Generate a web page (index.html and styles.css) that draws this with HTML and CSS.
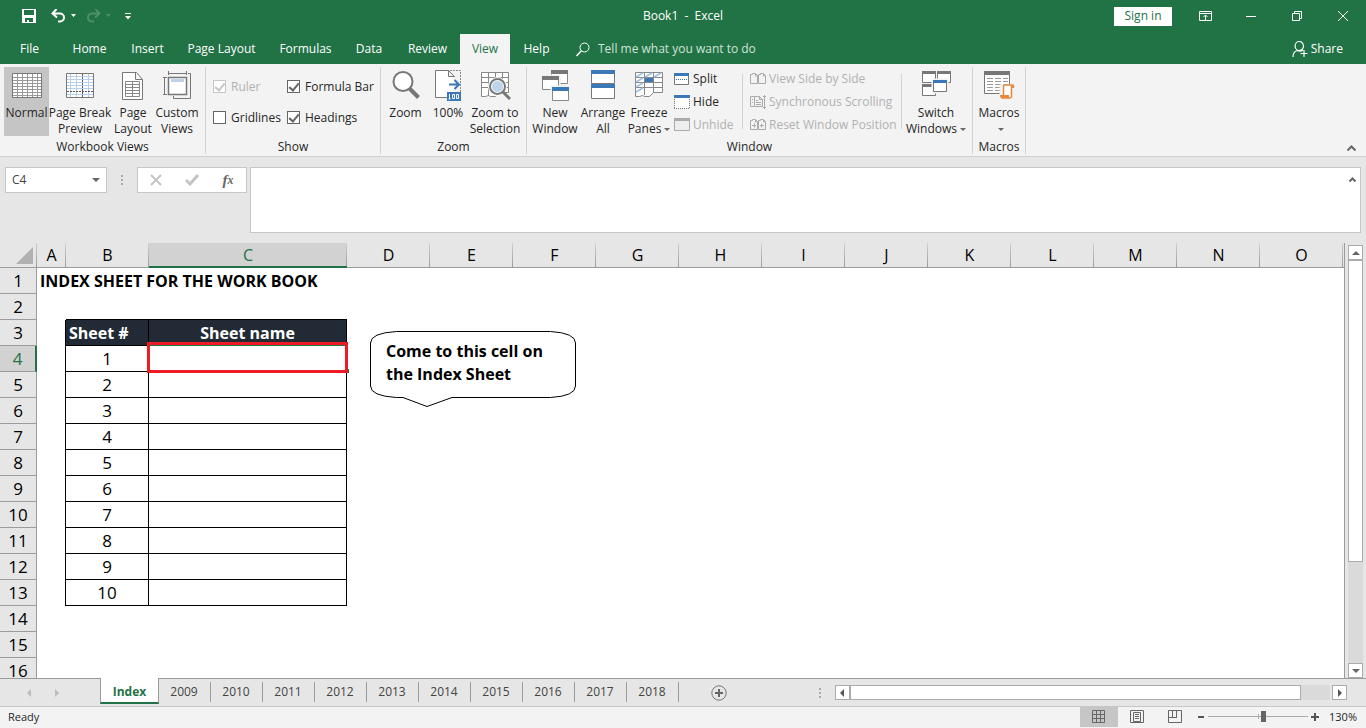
FILE: index.html
```html
<!DOCTYPE html>
<html lang="en">
<head>
    <meta charset="UTF-8">
    <meta name="viewport" content="width=device-width, initial-scale=1.0">
    <title>Book1 - Excel</title>
    <link rel="stylesheet" href="styles.css">
</head>
<body>

    <!-- Title Bar -->
    <header class="title-bar">
        <div class="quick-access">
            <button class="qa-save" aria-label="Save">
                <svg width="14" height="14" viewBox="0 0 14 14"><path fill="#fff" fill-rule="evenodd" d="M0 0h14v14H0zM2 1v5h10V1zM3 9v4h2v-2h2v2h4V9z"/></svg>
            </button>
            <button class="qa-undo" aria-label="Undo">
                <svg width="26" height="14" viewBox="0 0 26 14"><path fill="none" stroke="#fff" stroke-width="2" d="M5.500 0L1.500 4.500 6 8.500M2 4.500h7a4 4 0 0 1 0 8H7"/><path fill="#fff" d="M20 5h5l-2.500 3z"/></svg>
            </button>
            <button class="qa-redo" aria-label="Redo" disabled>
                <svg width="26" height="14" viewBox="0 0 26 14"><path fill="none" stroke="#4e8f6b" stroke-width="2" d="M9.500 0l4 4.500L9 8.500M13 4.500H6a4 4 0 0 0 0 8h2"/><path fill="#4e8f6b" d="M20 5h5l-2.500 3z"/></svg>
            </button>
            <button class="qa-more" aria-label="Customize Quick Access Toolbar">
                <svg width="6" height="7" viewBox="0 0 6 7"><path fill="#fff" d="M0 0h6v1H0zM0 3h6L3 6.500z"/></svg>
            </button>
        </div>
        <h1>Book1&nbsp; -&nbsp; Excel</h1>
        <div class="window-controls">
            <button class="sign-in">Sign in</button>
            <button class="win-btn" aria-label="Ribbon Display Options">
                <svg width="13" height="10" viewBox="0 0 13 10"><path fill="none" stroke="#fff" d="M.5.5h12v9H.5zM0 2.500h13M6.500 9V4M4.500 6l2-2 2 2"/></svg>
            </button>
            <button class="win-btn" aria-label="Minimize">
                <svg width="10" height="10" viewBox="0 0 10 10"><path stroke="#fff" d="M0 5.500h10"/></svg>
            </button>
            <button class="win-btn" aria-label="Restore">
                <svg width="10" height="10" viewBox="0 0 10 10"><path fill="none" stroke="#fff" d="M.5 2.500h7v7h-7zM2.500 2.500v-2h7v7h-2"/></svg>
            </button>
            <button class="win-btn" aria-label="Close">
                <svg width="10" height="10" viewBox="0 0 10 10"><path stroke="#fff" d="M0 0l10 10M10 0L0 10"/></svg>
            </button>
        </div>
    </header>

    <!-- Ribbon Tabs -->
    <nav class="ribbon-tabs">
        <div class="tabs">
            <button>File</button>
            <button>Home</button>
            <button>Insert</button>
            <button>Page Layout</button>
            <button>Formulas</button>
            <button>Data</button>
            <button>Review</button>
            <button class="active">View</button>
            <button>Help</button>
        </div>
        <label class="tell-me">
            <svg width="14" height="15" viewBox="0 0 14 15"><g fill="none" stroke="#fff"><circle cx="8.500" cy="5.500" r="4.500"/><path stroke-width="1.500" d="M5.500 8.500L.5 14"/></g></svg>
            <input type="text" placeholder="Tell me what you want to do">
        </label>
        <button class="share">
            <svg width="16" height="16" viewBox="0 0 16 16"><path fill="none" stroke="#fff" stroke-width="1.200" d="M1 16c0-4 2-6.500 6-6.500M11.500 5a4.200 4.500 0 1 1-8.400 0 4.200 4.500 0 0 1 8.400 0zM5 9c2 1.500 4 1.500 6 0M12 9v7M8.500 12.500h7"/></svg>
            Share
        </button>
    </nav>

    <!-- Ribbon -->
    <section class="ribbon">
        <div class="group views">
            <div class="group-body">
                <button class="big w45 pressed">
                    <svg width="32" height="34" viewBox="0 0 32 34"><path fill="#fff" stroke="#777" d="M1.500 4.500h29v24h-29z"/><path fill="none" stroke="#999" d="M2 8.500h28M2 11.500h28M2 14.500h28M2 17.500h28M2 20.500h28M2 23.500h28M2 26.500h28M6.500 5v23M11.500 5v23M16.500 5v23M21.500 5v23M26.500 5v23"/></svg>
                    <span>Normal</span>
                </button>
                <button class="big w62">
                    <svg width="32" height="34" viewBox="0 0 32 34"><path fill="#fff" stroke="#777" d="M2.500 4.500h27v24h-27z"/><path fill="none" stroke="#b7cfe8" d="M3 7.500h26M3 10.500h26M3 13.500h26M3 16.500h26M3 19.500h26M3 25.500h26M6.500 5v23M12.500 5v23M24.500 5v23"/><path fill="none" stroke="#555" stroke-dasharray="2 1" d="M18.500 5v23M3 22.500h26"/></svg>
                    <span>Page Break<br>Preview</span>
                </button>
                <button class="big w44">
                    <svg width="32" height="34" viewBox="0 0 32 34"><path fill="#fff" stroke="#777" d="M5.500 3.500h14l6 7v20h-20zM18.500 3.500v7h7"/><path fill="none" stroke="#888" d="M8.500 12.500h14v15h-14zM8 15.500h15M8 18.500h15M8 21.500h15M8 24.500h15M15.500 12v16"/></svg>
                    <span>Page<br>Layout</span>
                </button>
                <button class="big w44">
                    <svg width="32" height="34" viewBox="0 0 32 34"><path fill="#fff" stroke="#777" stroke-width="1.500" d="M7.500 8.500h18v17h-18z"/><path fill="#bcd3ea" d="M10 10h13v3H10z"/><path fill="none" stroke="#777" d="M7.500 2v4M25.500 2v4M7 4.500h19M2 8.500h4M2 25.500h4M3.500 8v18M27 4.500h2.500v25h-17V27"/></svg>
                    <span>Custom<br>Views</span>
                </button>
            </div>
            <h2>Workbook Views</h2>
        </div>

        <div class="group show">
            <div class="group-body checks">
                <label class="off"><input type="checkbox" checked disabled>Ruler</label>
                <label><input type="checkbox" checked>Formula Bar</label>
                <label><input type="checkbox">Gridlines</label>
                <label><input type="checkbox" checked>Headings</label>
            </div>
            <h2>Show</h2>
        </div>

        <div class="group zoom">
            <div class="group-body">
                <button class="big w41">
                    <svg width="32" height="34" viewBox="0 0 32 34"><circle cx="13" cy="12.500" r="9.500" fill="#fff" stroke="#777" stroke-width="2"/><path stroke="#777" stroke-width="4" d="M19.500 19.500l9 9"/></svg>
                    <span>Zoom</span>
                </button>
                <button class="big w44">
                    <svg width="32" height="34" viewBox="0 0 32 34"><path fill="#fff" stroke="#777" d="M3.500 1.500h13l6 6v21h-19zM16.500 1.500v6h6"/><path fill="#f2f2f2" d="M15 24h17v10H15zM22 8h3v16h-3z"/><path fill="none" stroke="#888" stroke-dasharray="2 1" d="M18 1.500h10.500V24"/><path fill="none" stroke="#3b78b8" stroke-width="2" d="M17 15.500h9M22.500 11l4.500 4.500-4.500 4.500"/><path fill="#3b78b8" d="M15 23h14v9H15z"/><path fill="none" stroke="#fff" d="M17.500 25v5M16.500 30h2M20.500 25.500h2v4h-2zM24.500 25.500h2v4h-2z"/></svg>
                    <span>100%</span>
                </button>
                <button class="big w50">
                    <svg width="32" height="34" viewBox="0 0 32 34"><path fill="#fff" stroke="#888" d="M2.500 3.500h27v20h-9l-4 4h-5l-2-1-3 1h-4zM3 8.500h26M3 13.500h26M3 18.500h26M9.500 4v23M16.500 4v22M23.500 4v20"/><circle cx="18.500" cy="17.500" r="7.500" fill="#bcd3ea" stroke="#fff" stroke-width="4"/><circle cx="18.500" cy="17.500" r="7.500" fill="none" stroke="#777" stroke-width="2"/><path stroke="#777" stroke-width="3" d="M24 23l7 7"/></svg>
                    <span>Zoom to<br>Selection</span>
                </button>
            </div>
            <h2>Zoom</h2>
        </div>

        <div class="group window">
            <div class="group-body">
                <button class="big w48">
                    <svg width="32" height="34" viewBox="0 0 32 34"><path fill="#fff" stroke="#888" d="M12.500 1.500h16v13h-16z"/><path fill="#777" d="M12 1h17v4H12z"/><path fill="#fff" stroke="#f2f2f2" stroke-width="3" d="M3 7h17v14H3z"/><path fill="#fff" stroke="#888" d="M3.500 7.500h16v13h-16z"/><path fill="#777" d="M3 7h17v4H3z"/><path fill="#fff" stroke="#f2f2f2" stroke-width="3" d="M13 18h17v14H13z"/><path fill="#fff" stroke="#888" d="M13.500 18.500h16v13h-16z"/><path fill="#3b78b8" d="M13 18h17v4H13z"/></svg>
                    <span>New<br>Window</span>
                </button>
                <button class="big w48">
                    <svg width="32" height="34" viewBox="0 0 32 34"><path fill="#fff" stroke="#777" d="M4.500 1.500h23v13h-23zM4.500 15.500h23v14h-23z"/><path fill="#3b78b8" d="M4 1h24v4H4zM4 15h24v4H4z"/></svg>
                    <span>Arrange<br>All</span>
                </button>
                <button class="big w44">
                    <svg width="32" height="34" viewBox="0 0 32 34"><path fill="#fff" stroke="#888" d="M2.500 3.500h27v20h-9l-4 4h-5l-2-1-3 1h-4zM3 8.500h26M3 13.500h26M3 18.500h26M11.500 4v22M20.500 4v20"/><path fill="none" stroke="#9dbfe2" stroke-width="1.500" d="M3 8l7-4M12 8l7-4M21 8l7-4M3 13l7-4M3 18l7-4M3 23l7-4"/><path fill="#3b78b8" d="M12 9h8v4h-8z"/></svg>
                    <span>Freeze<br>Panes<i class="caret"></i></span>
                </button>
                <div class="small-list">
                    <button class="small">
                        <svg width="16" height="14" viewBox="0 0 16 14"><path fill="#fff" stroke="#777" d="M.5 1.500h14v11H.5z"/><path fill="#3b78b8" d="M0 1h15v3H0z"/><path stroke="#3b78b8" stroke-dasharray="1 1" d="M2 7.500h12"/></svg>Split
                    </button>
                    <button class="small">
                        <svg width="16" height="14" viewBox="0 0 16 14"><path fill="#fff" d="M1 1h14v12H1z"/><path fill="none" stroke="#777" stroke-dasharray="1 1" d="M.5 4v10M15.500 4v10M0 13.500h16"/><path fill="#3b78b8" d="M0 0h16v3H0z"/></svg>Hide
                    </button>
                    <button class="small" disabled>
                        <svg width="16" height="14" viewBox="0 0 16 14"><path fill="#eee" stroke="#aaa" d="M.5.5h15v12H.5z"/><path fill="#aaa" d="M0 0h16v3H0z"/></svg>Unhide
                    </button>
                </div>
                <div class="small-list divided">
                    <button class="small" disabled>
                        <svg width="16" height="14" viewBox="0 0 16 14"><path fill="none" stroke="#aaa" d="M.5 2.500h2v-1h3l2 2v8h-7zM8.500 2.500h2v-1h3l2 2v8h-7zM5.500 2v2h2M13.500 2v2h2"/></svg>View Side by Side
                    </button>
                    <button class="small" disabled>
                        <svg width="16" height="16" viewBox="0 0 16 16"><path fill="none" stroke="#aaa" d="M4 2.500H.5v10H4M4.500 2.500h5l3 3v7h-8zM9.500 2.500v3h3M2 5.500h1M2 8.500h1M6 6.500h2M6 8.500h5M6 10.500h5M14.500 1v14M13 2.500h3M13 13.500h3"/></svg>Synchronous Scrolling
                    </button>
                    <button class="small" disabled>
                        <svg width="16" height="14" viewBox="0 0 16 14"><path fill="none" stroke="#aaa" d="M.5 2.500h2v-1h3l2 2v8h-7zM8.500 2.500h2v-1h3l2 2v8h-7zM5.500 2v2h2M13.500 2v2h2M2 7.500h4M10 7.500h4M4.500 5.500v4M11.500 5.500v4"/></svg>Reset Window Position
                    </button>
                </div>
                <div class="divided switch">
                    <button class="big w60">
                        <svg width="32" height="34" viewBox="0 0 32 34"><path fill="#fff" stroke="#777" d="M2.500 2.500h13v11h-13zM17.500 2.500h13v11h-13zM2.500 15.500h13v11h-13z"/><path fill="#777" d="M2 2h14v3H2zM17 2h14v3H17zM2 15h14v3H2z"/><path fill="#fff" stroke="#f2f2f2" stroke-width="3" d="M13 11h14v12H13z"/><path fill="#fff" stroke="#777" d="M13.500 11.500h13v11h-13z"/><path fill="#3b78b8" d="M13 11h14v3H13z"/></svg>
                        <span>Switch<br>Windows<i class="caret"></i></span>
                    </button>
                </div>
            </div>
            <h2>Window</h2>
        </div>

        <div class="group macros">
            <div class="group-body">
                <button class="big w44">
                    <svg width="32" height="34" viewBox="0 0 32 34"><path fill="#fff" stroke="#777" d="M1.500 2.500h25v22h-25z"/><path fill="#777" d="M1 2h26v4H1z"/><path stroke="#999" stroke-dasharray="6 2" d="M4 9.500h21M4 12.500h21M4 15.500h21M4 18.500h14M4 21.500h14"/><path fill="#fff" stroke="#f2f2f2" stroke-width="3" d="M18 17h12v11H18z"/><path fill="#fff" stroke="#e8883a" stroke-width="1.500" d="M20.500 27V17.500q0-1.500 2-1.500h8q-2 0-2 2.500V27q0 2-2 2h-8q2 0 2-2z"/><path fill="#e8883a" d="M17 26h9v3h-8q-1 0-1-3zM28 16h2q2 0 1 3h-3z"/></svg>
                    <span>Macros<br><i class="caret"></i></span>
                </button>
            </div>
            <h2>Macros</h2>
        </div>

        <button class="collapse" aria-label="Collapse the Ribbon">
            <svg width="9" height="6" viewBox="0 0 9 6"><path fill="none" stroke="#666" stroke-width="2" d="M.5 5.500l4-4 4 4"/></svg>
        </button>
    </section>

    <!-- Formula Bar -->
    <section class="formula-bar">
        <div class="name-box">
            <input type="text" value="C4" aria-label="Name Box">
            <button aria-label="Names"><i class="caret"></i></button>
        </div>
        <span class="grip"></span>
        <div class="formula-buttons">
            <button aria-label="Cancel"><svg width="12" height="12" viewBox="0 0 12 12"><path stroke="#c4c4c4" stroke-width="2" d="M1 1l10 10M11 1L1 11"/></svg></button>
            <button aria-label="Enter"><svg width="14" height="12" viewBox="0 0 14 12"><path fill="none" stroke="#c4c4c4" stroke-width="3" d="M1 6l4 4 8-9"/></svg></button>
            <button class="fx" aria-label="Insert Function">f<sub>x</sub></button>
        </div>
        <div class="formula-input">
            <textarea aria-label="Formula"></textarea>
            <button aria-label="Collapse Formula Bar"><svg width="7" height="5" viewBox="0 0 7 5"><path fill="none" stroke="#666" stroke-width="2" d="M.5 4.500l3-3 3 3"/></svg></button>
        </div>
    </section>

    <!-- Sheet -->
    <main class="sheet-area">
        <div class="sheet">
            <table>
                <colgroup>
                    <col class="col-head"><col class="col-a"><col class="col-std"><col class="col-c">
                    <col class="col-std"><col class="col-std"><col class="col-std"><col class="col-std">
                    <col class="col-std"><col class="col-std"><col class="col-std"><col class="col-std">
                    <col class="col-std"><col class="col-std"><col class="col-std"><col class="col-std">
                    <col>
                </colgroup>
                <thead>
                    <tr>
                        <th class="corner"><svg width="17" height="17" viewBox="0 0 17 17"><path fill="#b1b1b1" d="M17 0v17H0z"/></svg></th>
                        <th>A</th><th>B</th><th class="current">C</th><th>D</th><th>E</th><th>F</th><th>G</th><th>H</th>
                        <th>I</th><th>J</th><th>K</th><th>L</th><th>M</th><th>N</th><th>O</th><th></th>
                    </tr>
                </thead>
                <tbody>
                    <tr><th>1</th><td class="heading">INDEX SHEET FOR THE WORK BOOK</td><td></td><td></td><td colspan="13"></td></tr>
                    <tr class="above"><th>2</th><td></td><td></td><td></td><td colspan="13"></td></tr>
                    <tr class="list names"><th>3</th><td></td><td>Sheet #</td><td>Sheet name</td><td colspan="13"></td></tr>
                    <tr class="list current"><th>4</th><td></td><td>1</td><td class="selected"><span class="marker"></span></td><td colspan="13"></td></tr>
                    <tr class="list"><th>5</th><td></td><td>2</td><td></td><td colspan="13"></td></tr>
                    <tr class="list"><th>6</th><td></td><td>3</td><td></td><td colspan="13"></td></tr>
                    <tr class="list"><th>7</th><td></td><td>4</td><td></td><td colspan="13"></td></tr>
                    <tr class="list"><th>8</th><td></td><td>5</td><td></td><td colspan="13"></td></tr>
                    <tr class="list"><th>9</th><td></td><td>6</td><td></td><td colspan="13"></td></tr>
                    <tr class="list"><th>10</th><td></td><td>7</td><td></td><td colspan="13"></td></tr>
                    <tr class="list"><th>11</th><td></td><td>8</td><td></td><td colspan="13"></td></tr>
                    <tr class="list"><th>12</th><td></td><td>9</td><td></td><td colspan="13"></td></tr>
                    <tr class="list"><th>13</th><td></td><td>10</td><td></td><td colspan="13"></td></tr>
                    <tr><th>14</th><td></td><td></td><td></td><td colspan="13"></td></tr>
                    <tr><th>15</th><td></td><td></td><td></td><td colspan="13"></td></tr>
                    <tr><th>16</th><td></td><td></td><td></td><td colspan="13"></td></tr>
                </tbody>
            </table>
            <div class="callout">
                <svg width="207" height="77" viewBox="0 0 207 77"><path fill="#fff" stroke="#000" d="M26.500.5h154Q205.500 2 205.500 12v43Q205.500 65 180.500 66.500H82L57 75.500 33 66.500h-6.500Q.5 65 .5 55V12Q.5 2 26.500.5z"/></svg>
                <p>Come to this cell on<br>the Index Sheet</p>
            </div>
        </div>
        <div class="v-scroll">
            <button aria-label="Scroll up"><i class="arrow up"></i></button>
            <div class="track"><div class="thumb"></div></div>
            <button aria-label="Scroll down"><i class="arrow down"></i></button>
        </div>
    </main>

    <!-- Sheet Tabs -->
    <footer class="sheet-tabs">
        <div class="tab-nav">
            <button aria-label="Previous sheet" disabled><i class="arrow left"></i></button>
            <button aria-label="Next sheet" disabled><i class="arrow right"></i></button>
        </div>
        <div class="tab-list">
            <button class="active">Index</button>
            <button>2009</button>
            <button>2010</button>
            <button>2011</button>
            <button>2012</button>
            <button>2013</button>
            <button>2014</button>
            <button>2015</button>
            <button>2016</button>
            <button>2017</button>
            <button>2018</button>
        </div>
        <button class="new-sheet" aria-label="New sheet">
            <svg width="16" height="16" viewBox="0 0 16 16"><circle cx="8" cy="8" r="7.200" fill="none" stroke="#777"/><path stroke="#666" stroke-width="2" d="M4 8h8M8 4v8"/></svg>
        </button>
        <span class="grip"></span>
        <div class="h-scroll">
            <button aria-label="Scroll left"><i class="arrow left"></i></button>
            <div class="track"><div class="thumb"></div></div>
            <button aria-label="Scroll right"><i class="arrow right"></i></button>
        </div>
    </footer>

    <!-- Status Bar -->
    <footer class="status-bar">
        <span class="ready">Ready</span>
        <button class="view active" aria-label="Normal view"><svg width="14" height="14" viewBox="0 0 14 14"><path fill="none" stroke="#666" d="M.5.5h12v12H.5zM0 4.500h13M0 8.500h13M4.500 0v13M8.500 0v13"/></svg></button>
        <button class="view" aria-label="Page Layout view"><svg width="14" height="14" viewBox="0 0 14 14"><path fill="none" stroke="#666" d="M.5.5h13v12H.5zM3.500 2.500h7v9h-7zM5 4.500h4M5 6.500h4M5 8.500h4"/></svg></button>
        <button class="view" aria-label="Page Break Preview"><svg width="14" height="14" viewBox="0 0 14 14"><path fill="none" stroke="#666" d="M.5.5h13v12H.5zM0 7.500h9M4.500 0v7M8.500 0v8"/></svg></button>
        <button class="zoom-step" aria-label="Zoom out"><svg width="8" height="8" viewBox="0 0 8 8"><path stroke="#555" stroke-width="2" d="M1 4h6"/></svg></button>
        <input type="range" min="0" max="100" value="56" aria-label="Zoom">
        <button class="zoom-step" aria-label="Zoom in"><svg width="8" height="8" viewBox="0 0 8 8"><path stroke="#555" stroke-width="2" d="M0 4h8M4 0v8"/></svg></button>
        <span class="percent">130%</span>
    </footer>

</body>
</html>
```
FILE: styles.css
```css
/* General Reset */
* {
    margin: 0;
    padding: 0;
    box-sizing: border-box;
}

body {
    display: flex;
    flex-direction: column;
    height: 100vh;
    overflow: hidden;
    background: #e6e6e6;
    color: #262626;
    font-family: "Open Sans", "Noto Sans", sans-serif;
    font-size: 12px;
    line-height: 16px;
}

button, input, textarea {
    font: inherit;
    color: inherit;
    border: none;
    background: none;
    outline: none;
}

button {
    display: flex;
    align-items: center;
    justify-content: center;
    white-space: nowrap;
}

h1, h2 {
    font-size: 12px;
    font-weight: normal;
    text-align: center;
}

svg {
    display: block;
    flex: none;
}

/* Small arrows */
.caret {
    display: inline-block;
    border: 3px solid transparent;
    border-top-color: #666;
    border-bottom: none;
    margin-left: 3px;
    vertical-align: 2px;
}

.arrow {
    border: 4px solid transparent;
}

.arrow.up {
    border-top: none;
    border-bottom-color: #666;
}

.arrow.down {
    border-bottom: none;
    border-top-color: #666;
}

.arrow.left {
    border-left: none;
    border-right-color: #555;
}

.arrow.right {
    border-right: none;
    border-left-color: #555;
}

.grip {
    width: 2px;
    height: 10px;
    background: repeating-linear-gradient(#aaa 0 2px, transparent 2px 4px);
}

/* Title Bar */
.title-bar {
    display: grid;
    grid-template-columns: 1fr auto 1fr;
    align-items: center;
    flex: none;
    height: 34px;
    padding-bottom: 2px;
    background: #217346;
    color: #fff;
}

.quick-access {
    display: flex;
    align-items: center;
    gap: 9px;
    padding-left: 22px;
}

.qa-save {
    margin-right: 6px;
}

.qa-more {
    margin-left: 4px;
}

.window-controls {
    display: flex;
    justify-content: flex-end;
    align-items: center;
    height: 30px;
}

.sign-in {
    width: 58px;
    height: 19px;
    margin-right: 10px;
    background: #fff;
    color: #217346;
}

.win-btn {
    width: 46px;
    height: 30px;
}

/* Ribbon Tabs */
.ribbon-tabs {
    display: flex;
    flex: none;
    height: 30px;
    background: #217346;
    color: #fff;
}

.tabs {
    display: grid;
    grid-template-columns: 59px 61px 55px 93px 75px 52px 65px 50px 53px;
}

.tabs .active {
    background: #f3f3f3;
    color: #217346;
}

.tell-me {
    display: flex;
    align-items: center;
    gap: 8px;
    flex: 1;
    padding-left: 13px;
}

.tell-me input {
    width: 200px;
}

.tell-me input::placeholder {
    color: #cfe3d7;
}

.share {
    gap: 3px;
    margin-right: 23px;
}

/* Ribbon */
.ribbon {
    display: flex;
    flex: none;
    height: 93px;
    padding: 3px 0 2px;
    background: #f3f3f3;
    border-bottom: 1px solid #d2d2d2;
}

.group {
    display: flex;
    flex-direction: column;
    flex: none;
    padding: 0 4px;
    border-right: 1px solid #d2d2d2;
}

.group h2 {
    line-height: 14px;
}

.views {
    width: 206px;
}

.show {
    width: 175px;
}

.zoom {
    width: 146px;
}

.window {
    width: 446px;
}

.macros {
    width: 53px;
}

.group-body {
    display: flex;
    flex: none;
    height: 69px;
    margin-bottom: 4px;
}

.big {
    flex: none;
    flex-direction: column;
    justify-content: flex-start;
    height: 69px;
    padding-top: 2px;
    gap: 2px;
    text-align: center;
}

.pressed {
    background: #c5c5c5;
}

.w41 { width: 41px; }
.w44 { width: 44px; }
.w45 { width: 45px; }
.w48 { width: 48px; }
.w50 { width: 50px; }
.w60 { width: 60px; }
.w62 { width: 62px; }

.checks {
    display: grid;
    grid-template-columns: 74px 1fr;
    grid-auto-rows: 31px;
    padding: 4px 0 0 3px;
}

.checks label {
    display: flex;
    align-items: center;
    gap: 5px;
    white-space: nowrap;
}

.checks .off {
    color: #b1b1b1;
}

.checks input {
    appearance: none;
    flex: none;
    width: 13px;
    height: 13px;
    background: #fff;
    border: 1px solid #666;
}

.checks input:checked::after {
    content: "";
    display: block;
    width: 4px;
    height: 8px;
    margin: 0 0 0 3px;
    border: solid #666;
    border-width: 0 2px 2px 0;
    transform: rotate(40deg);
}

.checks input:disabled,
.checks input:disabled::after {
    border-color: #c6c6c6;
}

.small-list {
    display: flex;
    flex-direction: column;
    width: 64px;
    padding-left: 3px;
}

.small {
    justify-content: flex-start;
    gap: 3px;
    height: 23px;
}

.small:disabled {
    color: #b1b1b1;
}

.divided {
    position: relative;
    margin-left: 7px;
    padding-left: 8px;
}

.divided::before {
    content: "";
    position: absolute;
    left: 0;
    top: 7px;
    bottom: 7px;
    width: 1px;
    background: #d2d2d2;
}

.small-list.divided {
    width: 152px;
}

.switch {
    padding-left: 5px;
}

.collapse {
    align-self: flex-end;
    margin: 0 10px 3px auto;
}

/* Formula Bar */
.formula-bar {
    display: flex;
    align-items: flex-start;
    flex: none;
    height: 86px;
    padding: 10px 5px;
}

.name-box {
    display: flex;
    width: 102px;
    height: 26px;
    background: #fff;
    border: 1px solid #c6c6c6;
}

.name-box input {
    flex: 1;
    min-width: 0;
    padding-left: 6px;
    color: #444;
}

.name-box button {
    width: 20px;
}

.name-box .caret {
    border-width: 4px;
    border-bottom: none;
    margin: 0;
}

.formula-bar .grip {
    margin: 8px 14px 0;
}

.formula-buttons {
    display: flex;
    width: 110px;
    height: 26px;
    margin-right: 3px;
    background: #fff;
    border: 1px solid #c6c6c6;
}

.formula-buttons button {
    flex: 1;
}

.formula-buttons .fx {
    font-family: "Liberation Serif", serif;
    font-size: 15px;
    font-style: italic;
    font-weight: bold;
    color: #666;
}

.fx sub {
    font-size: 12px;
}

.formula-input {
    display: flex;
    flex: 1;
    align-items: flex-start;
    height: 66px;
    background: #fff;
    border: 1px solid #c6c6c6;
}

.formula-input textarea {
    flex: 1;
    height: 64px;
    resize: none;
}

.formula-input button {
    width: 16px;
    height: 22px;
}

/* Sheet */
.sheet-area {
    display: flex;
    flex: 1;
    min-height: 0;
}

.sheet {
    position: relative;
    flex: 1;
    min-width: 0;
    overflow: hidden;
    border-right: 1px solid #9b9b9b;
    background: #fff;
    color: #000;
    font-size: 17px;
    line-height: 24px;
}

.sheet table {
    width: 100%;
    table-layout: fixed;
    border-collapse: separate;
    border-spacing: 0;
}

.col-head { width: 37px; }
.col-a { width: 29px; }
.col-std { width: 83px; }
.col-c { width: 198px; }

.sheet th {
    font-weight: normal;
    background: #e6e6e6;
    border-bottom: 1px solid #9b9b9b;
}

.sheet thead th {
    height: 25px;
    font-size: 16px;
    line-height: 22px;
    background: linear-gradient(#d0d0d0, #9b9b9b) right / 1px 100% no-repeat #e6e6e6;
}

.sheet thead th:last-child {
    background: #e6e6e6;
}

.sheet thead .current {
    background-color: #d2d2d2;
    color: #217346;
    border-bottom: 2px solid #217346;
}

.sheet .corner svg {
    margin-left: 16px;
}

.sheet tbody th {
    height: 26px;
    border-right: 1px solid #9b9b9b;
}

.sheet tbody .current th {
    background: #d2d2d2;
    color: #217346;
    border-right: 2px solid #217346;
}

.sheet td {
    height: 26px;
    white-space: nowrap;
}

.sheet .heading {
    padding-left: 3px;
    font-size: 16px;
    font-weight: bold;
}

.above td:nth-child(3),
.above td:nth-child(4) {
    border-bottom: 1px solid #000;
}

.list td:nth-child(2) {
    border-right: 1px solid #000;
}

.list td:nth-child(3),
.list td:nth-child(4) {
    text-align: center;
    border-right: 1px solid #000;
    border-bottom: 1px solid #000;
}

.names td:nth-child(3),
.names td:nth-child(4) {
    background: #222b35;
    color: #fff;
    font-size: 16px;
    font-weight: bold;
}

.names td:nth-child(3) {
    padding-left: 3px;
    text-align: left;
}

.selected {
    position: relative;
}

.marker {
    position: absolute;
    inset: -4px -2px -2px -2px;
    border: 3px solid #ed1c24;
    box-shadow: inset 0 1px #217346;
}

/* fill handle */
.marker::after {
    content: "";
    position: absolute;
    right: -4px;
    bottom: -3px;
    width: 1px;
    height: 4px;
    background: #217346;
}

.callout {
    position: absolute;
    left: 370px;
    top: 88px;
}

.callout p {
    position: absolute;
    left: 16px;
    top: 9px;
    font-size: 16px;
    font-weight: bold;
    line-height: 23px;
    white-space: nowrap;
}

/* Scroll Bars */
.v-scroll {
    display: flex;
    flex-direction: column;
    width: 15px;
    margin: 2px 3px 0;
}

.v-scroll button, .h-scroll button {
    flex: none;
    width: 15px;
    height: 15px;
    background: #fff;
    border: 1px solid #ababab;
}

.track {
    flex: 1;
    background: #dadada;
}

.thumb {
    background: #fff;
    border: 1px solid #ababab;
}

.v-scroll .thumb {
    height: 75%;
}

.h-scroll {
    display: flex;
    width: 37.5%;
    margin: 0 19px 0 14px;
}

.h-scroll .track {
    margin-right: 2px;
}

.h-scroll .thumb {
    width: 94%;
    height: 15px;
}

/* Sheet Tabs */
.sheet-tabs {
    display: flex;
    align-items: center;
    flex: none;
    height: 28px;
    background: #e6e6e6;
    border-top: 1px solid #9b9b9b;
}

.tab-nav {
    display: flex;
    gap: 24px;
    width: 100px;
    padding-left: 27px;
}

.tab-nav .arrow.left {
    border-right-color: #bbb;
}

.tab-nav .arrow.right {
    border-left-color: #bbb;
}

.tab-list {
    display: flex;
    align-self: flex-start;
}

.tab-list button {
    position: relative;
    width: 52px;
    height: 26px;
    padding-right: 2px;
    color: #444;
}

.tab-list button:not(.active)::after {
    content: "";
    position: absolute;
    right: 0;
    top: 3px;
    bottom: 3px;
    width: 1px;
    background: #9b9b9b;
}

.tab-list .active {
    width: 59px;
    margin-top: -1px;
    padding: 3px 0 0;
    background: #fff;
    color: #217346;
    font-weight: bold;
    border: 1px solid #9b9b9b;
    border-width: 0 1px 2px;
    border-bottom-color: #217346;
}

.new-sheet {
    margin-left: 32px;
}

.sheet-tabs .grip {
    margin-left: auto;
}

/* Status Bar */
.status-bar {
    display: flex;
    align-items: center;
    flex: none;
    height: 22px;
    padding: 0 9px 2px 0;
    background: #f3f3f3;
    border-top: 1px solid #c6c6c6;
    font-size: 11px;
}

.ready {
    flex: 1;
    padding-left: 8px;
}

.view {
    width: 38px;
    height: 21px;
}

.view.active {
    background: #c6c6c6;
}

.zoom-step {
    width: 14px;
    height: 21px;
}

.status-bar input {
    appearance: none;
    width: 100px;
    height: 21px;
    background:
        linear-gradient(#aaa, #aaa) center / 100% 1px no-repeat,
        linear-gradient(#aaa, #aaa) center / 1px 5px no-repeat;
}

.status-bar input::-webkit-slider-thumb {
    appearance: none;
    width: 5px;
    height: 11px;
    background: #666;
}

.percent {
    width: 35px;
    text-align: right;
}
```
